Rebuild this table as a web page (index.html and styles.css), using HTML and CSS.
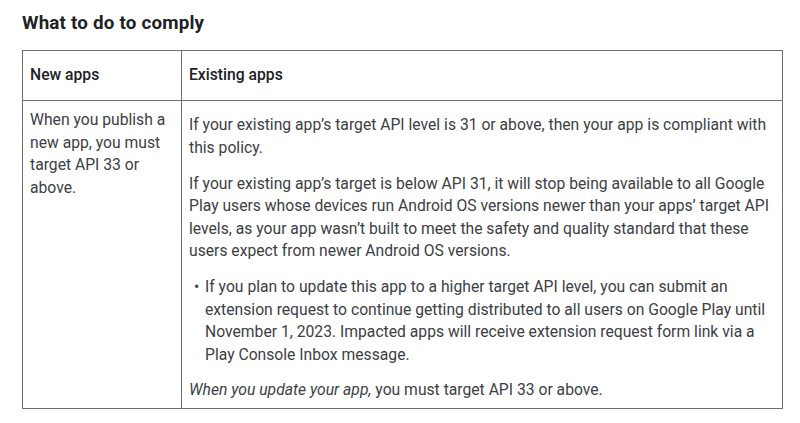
FILE: index.html
```html
<!DOCTYPE html>
<html>
<head>
<meta charset="utf-8">
<link rel="stylesheet" href="styles.css">
</head>
<body>
<h2 class="title">What to do to comply</h2>
<table class="grid">
  <thead>
    <tr>
      <th class="col-new">New apps</th>
      <th class="col-existing">Existing apps</th>
    </tr>
  </thead>
  <tbody>
    <tr>
      <td class="cell-new">When you publish a new app, you must target API 33 or above.</td>
      <td class="cell-existing">
        <p class="para first">If your existing app’s target API level is 31 or above, then your app is compliant with this policy.</p>
        <p class="para">If your existing app’s target is below API 31, it will stop being available to all Google Play users whose devices run Android OS versions newer than your apps’ target API levels, as your app wasn’t built to meet the safety and quality standard that these users expect from newer Android OS versions.</p>
        <ul class="list">
          <li>If you plan to update this app to a higher target API level, you can submit an extension request to continue getting distributed to all users on Google Play until November 1, 2023. Impacted apps will receive extension request form link via a Play Console Inbox message.</li>
        </ul>
        <p class="para last"><em>When you update your app,</em> you must target API 33 or above.</p>
      </td>
    </tr>
  </tbody>
</table>
</body>
</html>
```
FILE: styles.css
```css
html, body {
  margin: 0;
  padding: 0;
  background: #ffffff;
}
body {
  font-family: Roboto, "Liberation Sans", sans-serif;
  color: #3c4043;
  padding: 11px 17px 0 22px;
}
.title {
  margin: 0 0 15px 0;
  font-size: 18.8px;
  line-height: 24px;
  font-weight: 700;
  color: #202124;
  letter-spacing: 0.2px;
}
.grid {
  border-collapse: collapse;
  width: 761px;
  font-size: 15.7px;
  line-height: 22.5px;
}
.grid th, .grid td {
  border: 1px solid #707070;
  text-align: left;
  vertical-align: top;
}
.grid th {
  height: 50px;
  box-sizing: border-box;
  padding: 10px 7px;
  font-weight: 500;
  color: #202124;
  vertical-align: middle;
}
.col-new { width: 159px; }
.cell-new {
  padding: 8px 7px;
}
.cell-existing {
  padding: 8px 7px 6px 7px;
}
.para {
  margin: 0 0 13.5px 0;
}
.para.first { margin-top: 5px; }
.para.last { margin-bottom: 0; }
.list {
  margin: 0 0 13px 0;
  padding: 0 0 0 16px;
  list-style: none;
}
.list li {
  position: relative;
}
.list li::before {
  content: "•";
  position: absolute;
  left: -11px;
}
```
